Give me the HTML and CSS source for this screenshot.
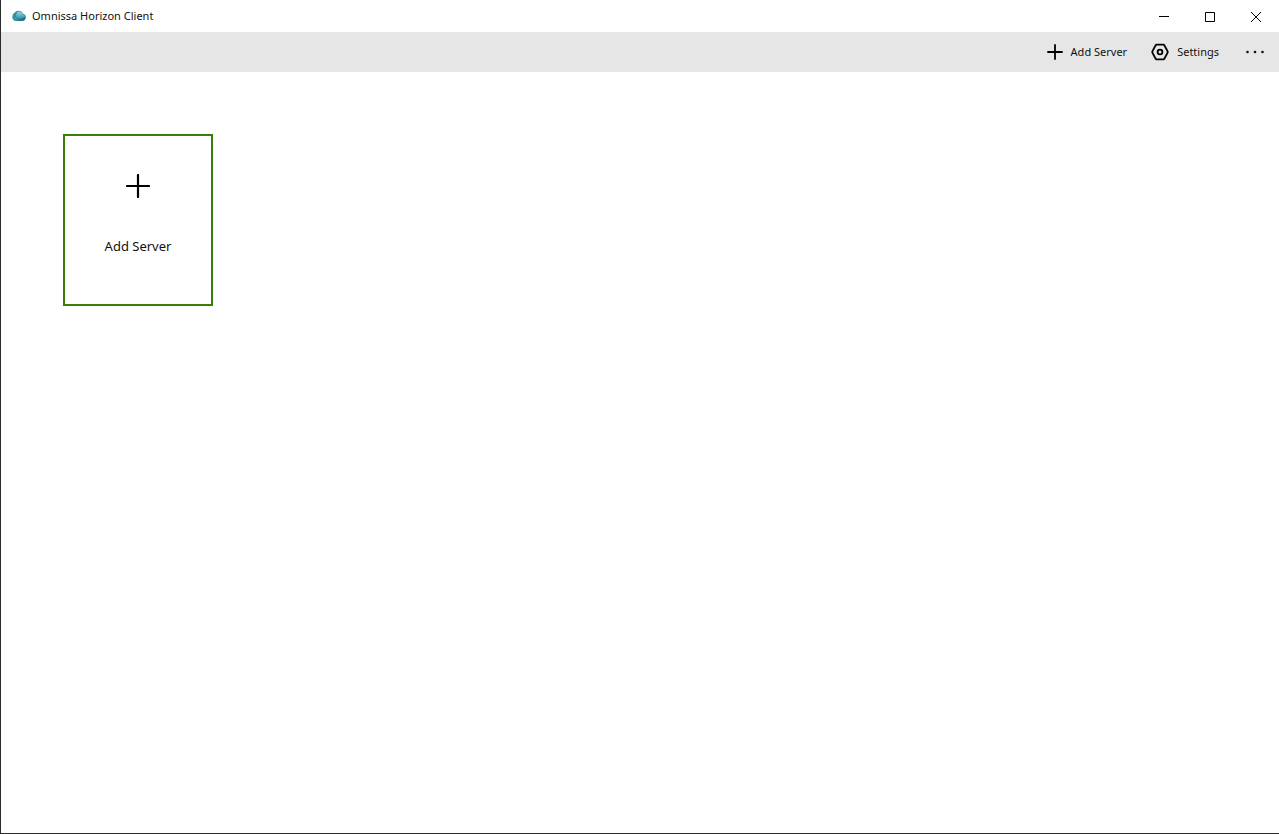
FILE: index.html
```html
<!DOCTYPE html>
<html lang="en">
<head>
  <meta charset="UTF-8" />
  <meta name="viewport" content="width=device-width, initial-scale=1.0" />
  <title>Omnissa Horizon Client</title>
  <link rel="stylesheet" href="styles.css">
</head>
<body>
  <header class="titlebar">
    <svg class="logo" width="14" height="12" viewBox="0 0 14 12" aria-hidden="true">
      <defs>
        <linearGradient id="cloud" x1="0" y1="0" x2="1" y2="1">
          <stop offset="0" stop-color="#2f7f8f" />
          <stop offset="0.5" stop-color="#3b9aae" />
          <stop offset="1" stop-color="#075a70" />
        </linearGradient>
        <linearGradient id="shine" x1="0" y1="0" x2="0" y2="1">
          <stop offset="0" stop-color="#9ad6df" />
          <stop offset="1" stop-color="#3b9aae" />
        </linearGradient>
      </defs>
      <path fill="url(#cloud)" d="M4 11C1.800 11 .3 9.500.3 7.200.3 5 1.300 3.600 2.600 2.700 3.600 1.400 5 .7 6.600.7c2.200 0 3.900 1.200 4.400 3.100 1.700.3 2.800 1.700 2.800 3.500C13.800 9.500 12.200 11 10 11z" />
      <path fill="url(#shine)" d="M4.500 6.500C3.800 4 5 1.600 7.200 1.400c1.900.1 3.100 1.300 3.400 3 1.300.3 2.100 1 2.400 2.200C10.500 8.500 7 9 4.500 6.500z" />
    </svg>
    <h1>Omnissa Horizon Client</h1>
    <div class="window-controls">
      <button type="button" aria-label="Minimize">
        <svg width="10" height="10" viewBox="0 0 10 10"><path d="M0 4.500h10" /></svg>
      </button>
      <button type="button" aria-label="Maximize">
        <svg width="10" height="10" viewBox="0 0 10 10"><path d="M.5.5h9v9h-9z" /></svg>
      </button>
      <button type="button" aria-label="Close">
        <svg width="10" height="10" viewBox="0 0 10 10"><path d="M0 0l10 10M10 0L0 10" /></svg>
      </button>
    </div>
  </header>

  <nav class="toolbar">
    <button type="button">
      <svg width="16" height="16" viewBox="0 0 16 16"><path stroke-width="1.8" d="M8 1v14M1 8h14" /></svg>
      <span>Add Server</span>
    </button>
    <button type="button">
      <svg width="18" height="18" viewBox="0 0 18 18" stroke-width="1.8">
        <path d="M5.800 1.700h6.400q.9 0 1.300.8l3 5.600q.5.900 0 1.800l-3 5.600q-.4.800-1.300.8H5.800q-.9 0-1.300-.8l-3-5.600q-.5-.9 0-1.800l3-5.600q.4-.8 1.300-.8z" />
        <circle cx="9" cy="9" r="2.400" />
      </svg>
      <span>Settings</span>
    </button>
    <button type="button" class="more" aria-label="More options">
      <svg width="18" height="4" viewBox="0 0 18 4">
        <circle cx="1.500" cy="2" r="1.300" />
        <circle cx="9" cy="2" r="1.300" />
        <circle cx="16.500" cy="2" r="1.300" />
      </svg>
    </button>
  </nav>

  <main>
    <button type="button" class="server-tile">
      <svg width="24" height="24" viewBox="0 0 24 24"><path stroke-width="2.200" d="M12 1v22M1 12h22" /></svg>
      <span>Add Server</span>
    </button>
  </main>
</body>
</html>
```
FILE: styles.css
```css
* {
  box-sizing: border-box;
}

body {
  margin: 0;
  min-height: 100vh;
  display: flex;
  flex-direction: column;
  font-family: 'Segoe UI', 'Noto Sans', 'Open Sans', sans-serif;
  font-size: 11px;
  color: #111111;
  background: #ffffff;
  border-left: 1px solid #2b2b2b;
  border-bottom: 1px solid #2b2b2b;
}

button {
  border: none;
  padding: 0;
  background: none;
  font: inherit;
  color: inherit;
  cursor: pointer;
}

svg {
  display: block;
  flex: none;
  fill: none;
  stroke: #000000;
}

.titlebar {
  display: flex;
  align-items: center;
  height: 32px;
  padding-left: 11px;
}

.logo {
  stroke: none;
  margin-right: 6px;
}

h1 {
  margin: 0;
  font-size: 11px;
  font-weight: 400;
  line-height: 16px;
}

.window-controls {
  display: flex;
  align-self: stretch;
  margin-left: auto;
}

.window-controls button {
  display: flex;
  align-items: center;
  justify-content: center;
  width: 46px;
  padding-top: 2px;
}

.toolbar {
  display: flex;
  justify-content: flex-end;
  height: 40px;
  background: #e6e6e6;
}

.toolbar button {
  display: flex;
  align-items: center;
  gap: 8px;
  padding: 0 12px;
  line-height: 16px;
}

.toolbar svg,
.server-tile svg {
  stroke-linecap: round;
}

.toolbar .more {
  padding: 0 15px;
}

.more svg {
  fill: #111111;
  stroke: none;
}

main {
  flex: 1;
  padding: 62px;
}

.server-tile {
  display: flex;
  flex-direction: column;
  align-items: center;
  gap: 38px;
  width: 150px;
  height: 172px;
  padding-top: 38px;
  border: 2px solid #378006;
  font-size: 13px;
  line-height: 20px;
}

button:hover {
  background-color: rgba(0, 0, 0, 0.05);
}
```
